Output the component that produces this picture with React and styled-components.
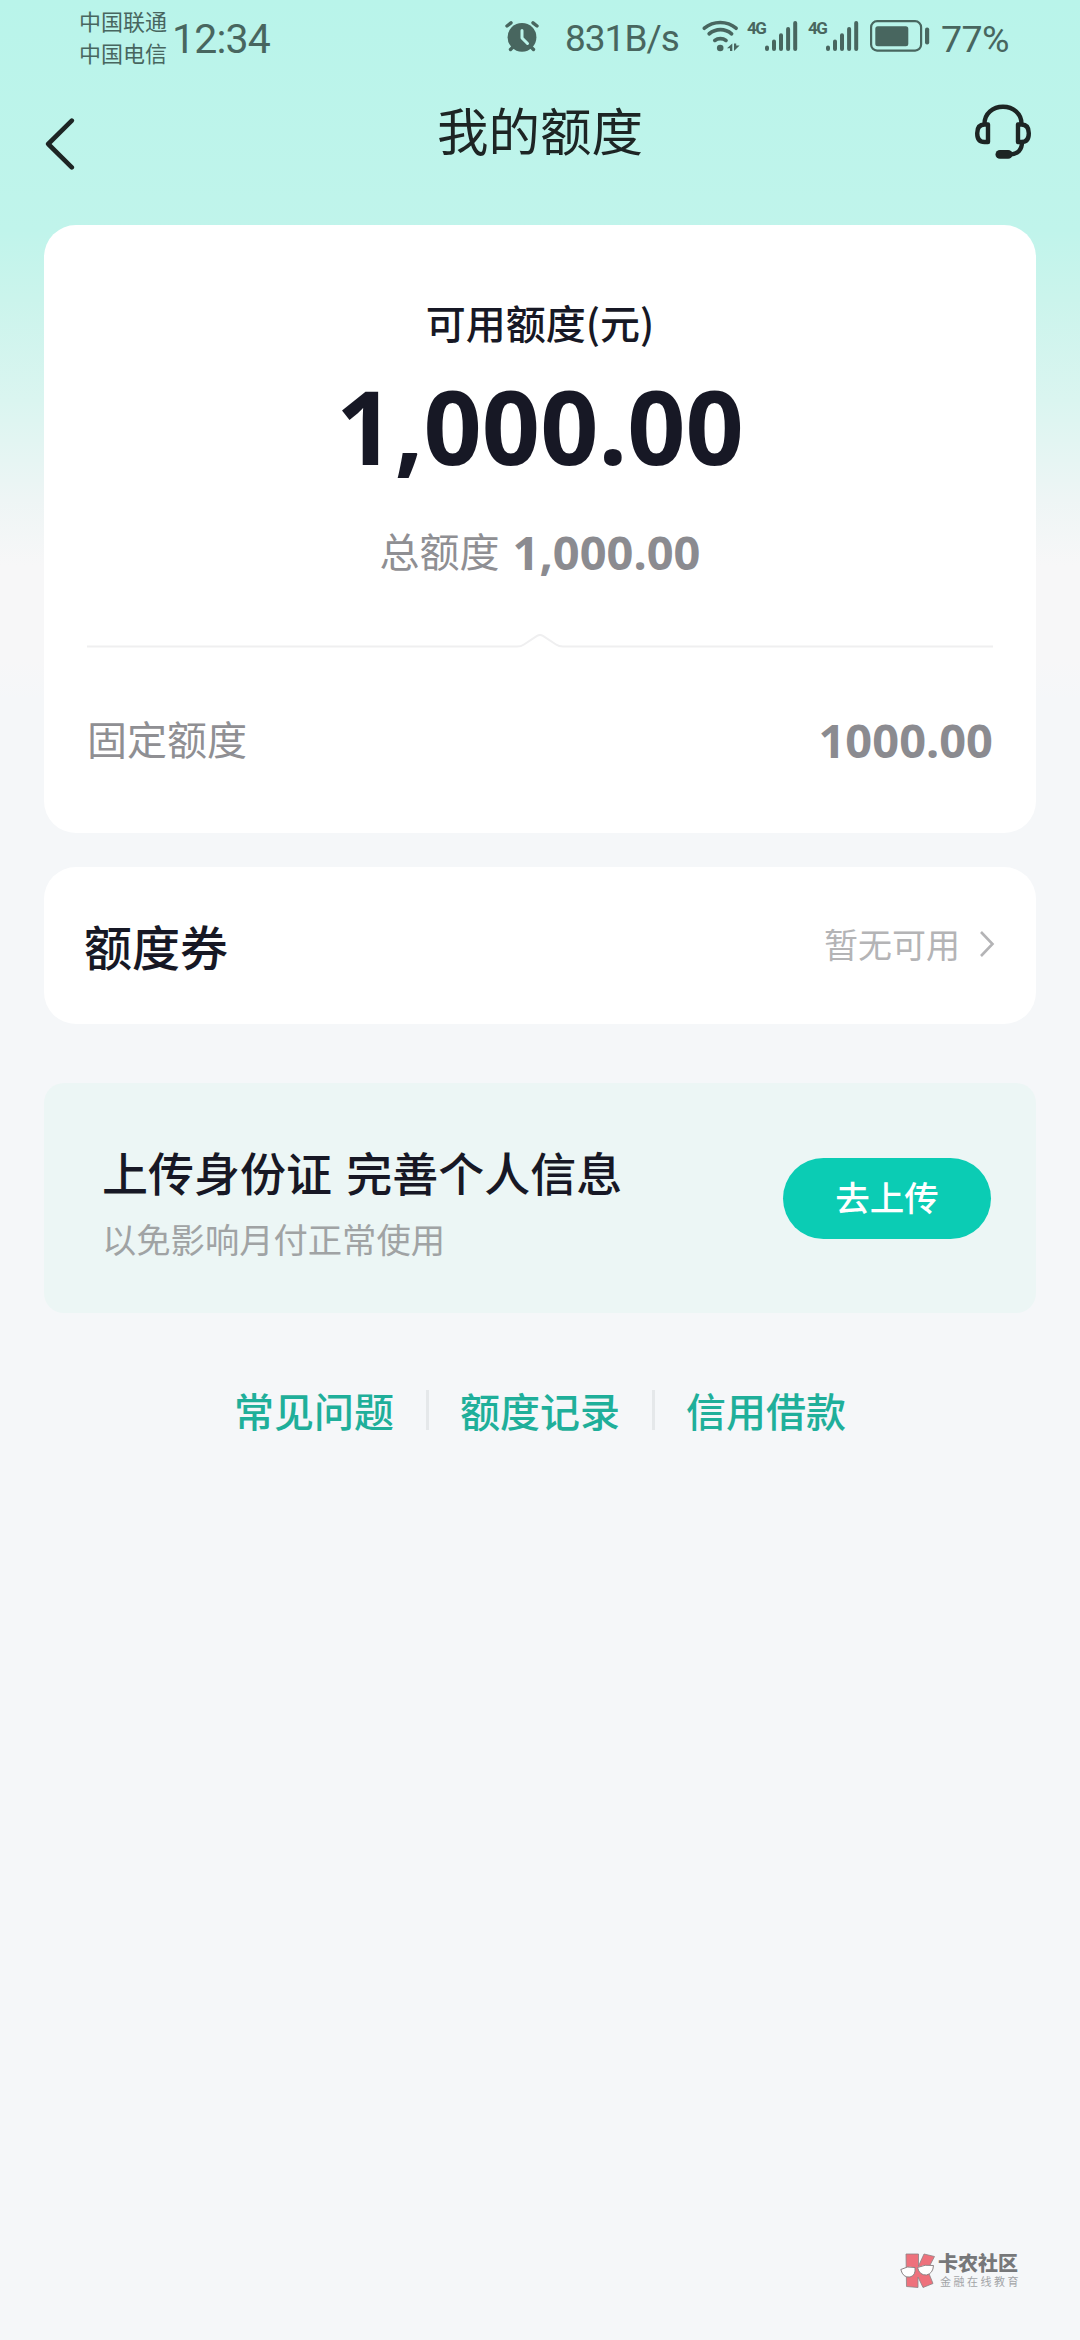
import React from "react";
import styled, { createGlobalStyle } from "styled-components";

function App() {
  return (
    <>
      <GlobalStyle />
      <Page>
        <StatusBar>
          <Carriers>
            <span>中国联通</span>
            <span>中国电信</span>
          </Carriers>
          <Clock>12:34</Clock>
          <AlarmIcon />
          <NetSpeed>831B/s</NetSpeed>
          <WifiIcon />
          <Signal />
          <Signal />
          <BatteryIcon />
          <BatteryText>77%</BatteryText>
        </StatusBar>

        <NavBar>
          <BackIcon />
          <Title>我的额度</Title>
          <HeadsetIcon />
        </NavBar>

        <Content>
          <QuotaCard>
            <QuotaLabel>可用额度(元)</QuotaLabel>
            <QuotaAmount>1,000.00</QuotaAmount>
            <TotalRow>
              <GreyLabel>总额度</GreyLabel>
              <GreyAmount>1,000.00</GreyAmount>
            </TotalRow>
            <Divider />
            <FixedRow>
              <GreyLabel>固定额度</GreyLabel>
              <GreyAmount>1000.00</GreyAmount>
            </FixedRow>
          </QuotaCard>

          <CouponCard>
            <CouponTitle>额度券</CouponTitle>
            <CouponHint>
              暂无可用
              <svg width="16" height="28" viewBox="0 0 16 28" fill="none">
                <path d="M2 2L13.5 14L2 26" stroke="#b4b4b6" strokeWidth="2.6" />
              </svg>
            </CouponHint>
          </CouponCard>

          <UploadBanner>
            <div>
              <BannerTitle>上传身份证 完善个人信息</BannerTitle>
              <BannerText>以免影响月付正常使用</BannerText>
            </div>
            <UploadButton>去上传</UploadButton>
          </UploadBanner>

          <Links>
            <a>常见问题</a>
            <a>额度记录</a>
            <a>信用借款</a>
          </Links>
        </Content>

        <Watermark>
          <WatermarkLogo />
          <div>
            <WatermarkName>卡农社区</WatermarkName>
            <WatermarkText>金融在线教育</WatermarkText>
          </div>
        </Watermark>
      </Page>
    </>
  );
}

export default App;

function AlarmIcon() {
  return (
    <Alarm width="34" height="31" viewBox="0 0 34 31" fill="none">
      <circle cx="17" cy="16.3" r="14.4" fill="#48665f" />
      <path
        d="M2 5L6 1.8M32 5L28 1.8M5.5 28.5L8 26M28.5 28.5L26 26"
        stroke="#48665f"
        strokeWidth="3.4"
        strokeLinecap="round"
      />
      <path
        d="M17 9.5V17L22.5 22.5"
        stroke="#bbf4ea"
        strokeWidth="3"
        strokeLinecap="round"
        strokeLinejoin="round"
      />
    </Alarm>
  );
}

function WifiIcon() {
  return (
    <Wifi width="38" height="32" viewBox="0 0 38 32" fill="none">
      <g stroke="#48665f" strokeWidth="3.7" strokeLinecap="round">
        <path d="M2.4 8.2C11.5 0.6 25 0.6 34 8.2" />
        <path d="M7.2 13.8C14 8.2 23 8.2 29.6 13.8" />
        <path d="M12.8 20.4C16 18 20.8 18 24 20.4" />
      </g>
      <circle cx="18.2" cy="28" r="3.3" fill="#48665f" />
      <path d="M30.3 23.5V31H28V28.2H25L30.3 23.5Z" fill="#48665f" />
      <path d="M32 31V23.5H34.2V25.6H37.6L32 31Z" fill="#48665f" />
    </Wifi>
  );
}

function Signal() {
  return (
    <SignalBox>
      <small>4G</small>
      <svg width="34" height="32" viewBox="0 0 34 32">
        <g stroke="#48665f" strokeWidth="4" strokeLinecap="round">
          <path d="M3 27.5V29M10 21.5V29M17 15.2V29M24.1 9V29M31.2 3V29" />
        </g>
      </svg>
    </SignalBox>
  );
}

function BatteryIcon() {
  return (
    <Battery width="60" height="32" viewBox="0 0 60 32" fill="none">
      <rect x="1.1" y="1.2" width="50" height="29.4" rx="6" stroke="#48665f" strokeWidth="2.2" />
      <rect x="5.3" y="6.2" width="33" height="20" rx="2.5" fill="#48665f" />
      <rect x="55" y="7.5" width="4.2" height="17" rx="2" fill="#48665f" />
    </Battery>
  );
}

function BackIcon() {
  return (
    <Back width="30" height="54" viewBox="0 0 30 54" fill="none">
      <path
        d="M26.8 3.6L3.2 27L26.8 50.4"
        stroke="#1d2524"
        strokeWidth="4.6"
        strokeLinecap="round"
        strokeLinejoin="round"
      />
    </Back>
  );
}

function HeadsetIcon() {
  return (
    <svg width="58" height="56" viewBox="0 0 58 56" fill="none">
      <g stroke="#1d2524" strokeWidth="4.4" strokeLinejoin="round">
        <path d="M10.5 20C10.5 9.5 19 2.8 29 2.8C39 2.8 47.5 9.5 47.5 20" />
        <path d="M14 20.5V38H10.5C5.5 38 3.2 34.5 3.2 29.2C3.2 24 5.5 20.5 10.5 20.5H14Z" />
        <path d="M44 20.5V38H47.5C52.5 38 54.8 34.5 54.8 29.2C54.8 24 52.5 20.5 47.5 20.5H44Z" />
        <path d="M48 38C48 45.5 44 50.2 36 50.5" />
      </g>
      <rect x="21.5" y="46" width="17" height="8.8" rx="4.4" fill="#1d2524" />
    </svg>
  );
}

function Divider() {
  return (
    <DividerLine width="906" height="16" viewBox="0 0 906 16" fill="none">
      <path
        d="M0 13.5H430Q434 13.5 437 11.5L450 2.8Q453 1 456 2.8L469 11.5Q472 13.5 476 13.5H906"
        stroke="#efeff0"
        strokeWidth="2"
      />
    </DividerLine>
  );
}

function WatermarkLogo() {
  return (
    <svg width="36" height="38" viewBox="0 0 36 38">
      <g fill="#ee717c" stroke="#8c8486" strokeWidth="0.8">
        <path d="M6 2L18.5 2L18.5 14L24 2L34.5 4.5L27.5 18L33 31.5L23 35.5L18 25V35.5L6.5 34.5Z" />
      </g>
      <g fill="#fff" stroke="#8c8486" strokeWidth="1">
        <path d="M0.8 17.5Q7 13.5 15 15.5Q16 23.5 10 25Q3 26 0.8 17.5Z" />
        <path d="M17.5 15.5Q25 12 33.5 13.5Q33 21.5 26.5 23Q19.5 23.5 17.5 15.5Z" />
      </g>
    </svg>
  );
}

const GlobalStyle = createGlobalStyle`
  body {
    margin: 0;
    background: #f5f7f9;
    font-family: "Noto Sans CJK SC", sans-serif;
  }

  svg {
    display: block;
    flex: none;
  }
`;

const Page = styled.div`
  display: flex;
  flex-direction: column;
  box-sizing: border-box;
  width: 1080px;
  height: 2340px;
  background: linear-gradient(
      #b9f4ea 0,
      #c0f4eb 230px,
      #cbf4ec 300px,
      #daf5f0 400px,
      #eef5f5 500px,
      #f7f7f8 565px,
      #f7f7f8 660px,
      #f5f7f9 700px
    )
    #f5f7f9;
`;

const StatusBar = styled.header`
  display: flex;
  align-items: flex-start;
  height: 76px;
  padding-left: 79px;
  color: #48665f;
  font-family: Roboto, sans-serif;
  white-space: nowrap;
`;

const Carriers = styled.div`
  display: flex;
  flex-direction: column;
  width: 93px;
  padding-top: 4px;
  font-family: "Noto Sans CJK SC", sans-serif;
  font-size: 22px;
  line-height: 32px;
`;

const Clock = styled.div`
  width: 333px;
  padding-top: 14px;
  font-size: 41px;
  line-height: 50px;
  letter-spacing: -0.8px;
`;

const Alarm = styled.svg`
  margin-top: 21px;
`;

const NetSpeed = styled.div`
  width: 137px;
  margin-left: 26px;
  padding-top: 14px;
  font-size: 37px;
  line-height: 50px;
  letter-spacing: -1px;
`;

const Wifi = styled.svg`
  margin-top: 20px;
`;

const SignalBox = styled.div`
  display: flex;
  width: 53px;
  margin: 20px 0 0 7px;

  & + & {
    margin-left: 8px;
  }

  small {
    width: 17px;
    font-size: 17px;
    font-weight: 700;
    line-height: 16px;
    letter-spacing: -1.5px;
  }
`;

const Battery = styled.svg`
  margin: 20px 0 0 9px;
`;

const BatteryText = styled.div`
  margin-left: 11px;
  padding-top: 14px;
  font-size: 37.5px;
  line-height: 50px;
  letter-spacing: -0.6px;
`;

const NavBar = styled.nav`
  display: flex;
  align-items: flex-start;
  justify-content: space-between;
  box-sizing: border-box;
  height: 121px;
  padding: 28px 48px 0 45px;
`;

const Back = styled.svg`
  margin-top: 13px;
`;

const Title = styled.h1`
  margin: 0 0 0 31px;
  color: #1d2524;
  font-size: 51.5px;
  font-weight: 400;
  line-height: 50px;
`;

const Content = styled.main`
  display: flex;
  flex-direction: column;
  padding: 28px 44px 0;
`;

const Card = styled.section`
  box-sizing: border-box;
  background: #fff;
  border-radius: 32px;
`;

const QuotaCard = styled(Card)`
  display: flex;
  flex-direction: column;
  align-items: center;
  height: 608px;
  padding: 70px 43px 0;
`;

const QuotaLabel = styled.div`
  color: #171825;
  font-size: 40px;
  font-weight: 500;
  line-height: 54px;
`;

const QuotaAmount = styled.div`
  margin-top: 22px;
  color: #171825;
  font-family: "Noto Sans", sans-serif;
  font-size: 102px;
  font-weight: 700;
  line-height: 110px;
`;

const TotalRow = styled.div`
  display: flex;
  align-items: center;
  gap: 13px;
  height: 60px;
  margin-top: 41px;
`;

const GreyLabel = styled.span`
  padding-bottom: 4px;
  color: #8f8f93;
  font-size: 40px;
  line-height: 56px;
`;

const GreyAmount = styled.span`
  color: #8b8b90;
  font-family: "Noto Sans", sans-serif;
  font-size: 47px;
  font-weight: 700;
  line-height: 56px;
`;

const DividerLine = styled.svg`
  margin-top: 51px;
`;

const FixedRow = styled.div`
  display: flex;
  align-items: center;
  align-self: stretch;
  justify-content: space-between;
  height: 60px;
  margin-top: 61px;
`;

const CouponCard = styled(Card)`
  display: flex;
  align-items: center;
  justify-content: space-between;
  height: 157px;
  margin-top: 34px;
  padding: 0 41px 0 40px;
`;

const CouponTitle = styled.h2`
  margin: 0;
  padding-bottom: 2px;
  color: #171825;
  font-size: 48px;
  font-weight: 500;
  line-height: 60px;
`;

const CouponHint = styled.div`
  display: flex;
  align-items: center;
  gap: 19px;
  padding-bottom: 4px;
  color: #b4b4b6;
  font-size: 34px;
  line-height: 50px;
`;

const UploadBanner = styled(Card)`
  display: flex;
  align-items: center;
  justify-content: space-between;
  height: 230px;
  margin-top: 59px;
  padding: 0 45px 0 58px;
  background: #ecf6f5;
  border-radius: 20px;
`;

const BannerTitle = styled.h2`
  margin: 9px 0 0;
  color: #171825;
  font-size: 46px;
  font-weight: 500;
  line-height: 66px;
  word-spacing: 4px;
`;

const BannerText = styled.p`
  margin: 4px 0 0;
  color: #a0a3a4;
  font-size: 34.3px;
  line-height: 60px;
`;

const UploadButton = styled.button`
  width: 208px;
  height: 81px;
  padding: 0 0 4px;
  border: 0;
  border-radius: 41px;
  background: #0bccb4;
  color: #fff;
  font-family: inherit;
  font-size: 34.5px;
  font-weight: 500;
`;

const Links = styled.div`
  display: flex;
  justify-content: center;
  margin-top: 77px;
  color: #1faf9a;
  font-size: 40px;
  font-weight: 500;
  line-height: 40px;

  a {
    padding: 0 31.5px;
  }

  a + a {
    border-left: 3px solid #e5e8ea;
  }
`;

const Watermark = styled.footer`
  display: flex;
  align-items: center;
  gap: 2px;
  margin: auto 59px 50px auto;
  color: #77787a;
  white-space: nowrap;
`;

const WatermarkName = styled.div`
  font-size: 20px;
  font-weight: 900;
  line-height: 20px;
`;

const WatermarkText = styled.div`
  padding-left: 2px;
  color: #a3a5a8;
  font-size: 11px;
  line-height: 16px;
  letter-spacing: 2.5px;
`;
